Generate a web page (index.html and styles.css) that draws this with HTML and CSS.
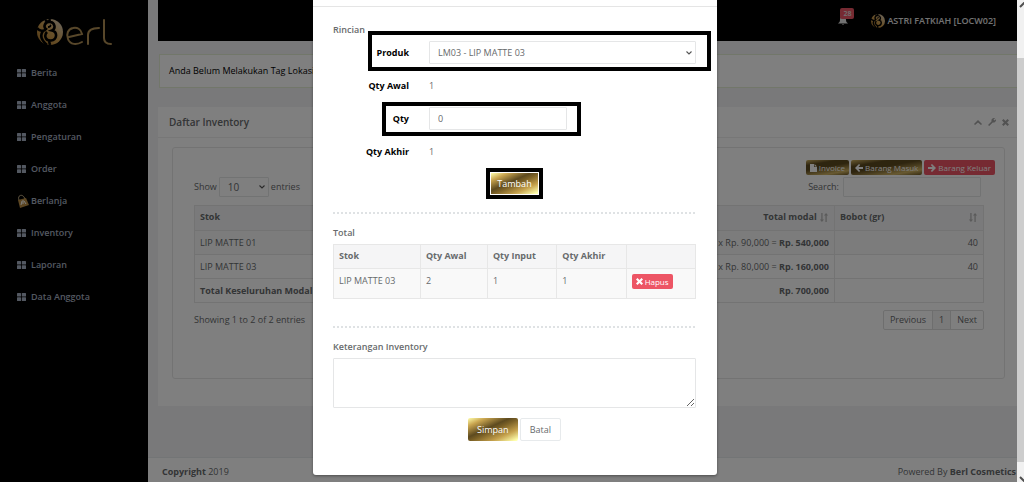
FILE: index.html
```html
<!DOCTYPE html>
<html lang="id">
  <head>
    <meta charset="UTF-8" />
    <meta name="viewport" content="width=device-width, initial-scale=1.0" />
    <title>Daftar Inventory</title>
    <link rel="stylesheet" href="styles.css">
  </head>
  <body>
    <!-- icon -->
    <svg class="sprite" width="0" height="0">
      <defs>
        <linearGradient id="gold" x1="0" y1="1" x2="1" y2="0">
          <stop offset="0" stop-color="#a8752c" />
          <stop offset="0.5" stop-color="#d0a052" />
          <stop offset="1" stop-color="#d8d0c4" />
        </linearGradient>
      </defs>
      <symbol id="i-grid" viewBox="0 0 9 8">
        <rect x="0" y="0" width="4" height="3.6" rx="0.5" />
        <rect x="4.8" y="0" width="4.2" height="3.6" rx="0.5" />
        <rect x="0" y="4.3" width="4" height="3.6" rx="0.5" />
        <rect x="4.8" y="4.3" width="4.2" height="3.6" rx="0.5" />
      </symbol>
      <symbol id="i-ball" viewBox="0 0 26 26">
        <circle cx="13" cy="13" r="13" />
        <g fill="none" stroke="#000" stroke-width="2.6">
          <path d="M0 9C2 12 7 13 9 10C6 8 8 2 13 3C18 3 19 10 15 11.500C21 13 20 21 14 21.500C8 22 7 16 10 13" />
          <path d="M6 12C3 16 4 21 10 26" />
          <path d="M11 8C13 8 14 7 13 6" stroke-width="2" />
          <path d="M12 22L13 26" />
          <path d="M8 1L11 3M13 0L12 3" />
        </g>
      </symbol>
      <symbol id="i-x" viewBox="0 0 10 10">
        <path d="M2.2 0L5 2.8L7.8 0L10 2.2L7.2 5L10 7.8L7.8 10L5 7.2L2.2 10L0 7.8L2.8 5L0 2.2Z" />
      </symbol>
      <symbol id="i-left" viewBox="0 0 10 10">
        <path d="M5 0L6.5 1.4L4.3 3.8H10V6.2H4.3L6.5 8.6L5 10L0 5Z" />
      </symbol>
      <symbol id="i-sort" viewBox="0 0 10 10">
        <path d="M2 0H3.4V7.2H5L2.7 10L0.4 7.2H2ZM6.6 10H8V2.8H9.6L7.3 0L5 2.8H6.6Z" />
      </symbol>
    </svg>

    <div class="shell">
      <div class="wrapper">
        <nav class="sidebar">
          <a class="logo" href="#" aria-label="Berl">
            <svg width="76" height="28" viewBox="0 0 76 28">
              <use href="#i-ball" x="0" y="1" width="26" height="26" fill="url(#gold)" />
              <g fill="none" stroke="#b08f55" stroke-width="2" stroke-linecap="round">
                <path d="M32 19L45 16C44 11 40 9 36 10C31 11 29 16 31 21C33 27 40 27 45 24" />
                <path d="M51 26V17C51 12 55 10 62 10" />
                <path d="M67 2V20C67 24 70 26 74 26" />
              </g>
            </svg>
          </a>
          <ul class="menu">
            <li><a href="#"><svg class="ic"><use href="#i-grid" /></svg>Berita</a></li>
            <li><a href="#"><svg class="ic"><use href="#i-grid" /></svg>Anggota</a></li>
            <li><a href="#"><svg class="ic"><use href="#i-grid" /></svg>Pengaturan</a></li>
            <li><a href="#"><svg class="ic"><use href="#i-grid" /></svg>Order</a></li>
            <li>
              <a href="#">
                <svg class="ic bag" viewBox="0 0 12 14">
                  <path d="M2 6C0 1 6 -1 8 5" fill="none" stroke="#c9b48a" />
                  <path d="M1 6L9 4L12 11L3 14Z" fill="#b98d45" />
                  <path d="M4 11L5 7L7 7L9 10M5 9H7" fill="none" stroke="#fff" />
                </svg>Berlanja</a>
            </li>
            <li><a href="#"><svg class="ic"><use href="#i-grid" /></svg>Inventory</a></li>
            <li><a href="#"><svg class="ic"><use href="#i-grid" /></svg>Laporan</a></li>
            <li><a href="#"><svg class="ic"><use href="#i-grid" /></svg>Data Anggota</a></li>
          </ul>
        </nav>

        <div class="page">
          <header class="topbar">
            <a class="bell" href="#" aria-label="Notifikasi">
              <svg width="10" height="9" viewBox="0 0 10 9">
                <path d="M5 0C7.500 0 8 2 8 4C8 6 9 6.500 10 7.500H0C1 6.500 2 6 2 4C2 2 2.500 0 5 0ZM4 8H6L5 9Z" />
              </svg>
              <span class="count">28</span>
            </a>
            <a class="user" href="#">
              <svg width="14" height="14"><use href="#i-ball" fill="url(#gold)" /></svg>
              ASTRI FATKIAH [LOCW02]
            </a>
          </header>

          <div class="alert">Anda Belum Melakukan Tag Lokasi.</div>

          <section class="ibox">
            <div class="ibox-title">
              <h5>Daftar Inventory</h5>
              <div class="ibox-tools">
                <a href="#" aria-label="Tutup"><svg width="8" height="5" viewBox="0 0 8 5"><path d="M4 0L8 4L7 5L4 2.500L1 5L0 4Z" /></svg></a>
                <a href="#" aria-label="Atur"><svg width="8" height="8" viewBox="0 0 8 8"><path d="M0 7L3.500 3.500C3 1 5 -0.500 7 0.200L5.500 1.500L6.500 2.500L8 1.200C8.500 3.500 6.500 5 4.700 4.500L1.200 8Z" /></svg></a>
                <a href="#" aria-label="Hapus"><svg width="7" height="7"><use href="#i-x" /></svg></a>
              </div>
            </div>
            <div class="panel">
              <div class="actions">
                <button class="btn-xs gold" type="button"><svg width="7" height="8" viewBox="0 0 7 8"><path d="M0 0H4V3H7V8H0ZM4.600 0L7 2.400H4.600Z" /></svg>Invoice</button>
                <button class="btn-xs gold" type="button"><svg width="8" height="8"><use href="#i-left" /></svg>Barang Masuk</button>
                <button class="btn-xs danger" type="button"><svg class="flip" width="8" height="8"><use href="#i-left" /></svg>Barang Keluar</button>
              </div>
              <div class="filters">
                <label>Show
                  <select class="control length"><option>10</option></select>
                  entries
                </label>
                <label>Search: <input class="control search" type="text" /></label>
              </div>
              <table class="table stock">
                <thead>
                  <tr>
                    <th>Stok</th>
                    <th class="num">Total modal <svg class="sort"><use href="#i-sort" /></svg></th>
                    <th class="bobot"><span>Bobot (gr)</span><svg class="sort"><use href="#i-sort" /></svg></th>
                  </tr>
                </thead>
                <tbody>
                  <tr class="odd"><td>LIP MATTE 01</td><td class="num">6 x Rp. 90,000 = <b>Rp. 540,000</b></td><td class="num">40</td></tr>
                  <tr><td>LIP MATTE 03</td><td class="num">2 x Rp. 80,000 = <b>Rp. 160,000</b></td><td class="num">40</td></tr>
                  <tr><td><b>Total Keseluruhan Modal</b></td><td class="num"><b>Rp. 700,000</b></td><td></td></tr>
                </tbody>
              </table>
              <div class="table-foot">
                <span>Showing 1 to 2 of 2 entries</span>
                <div class="pages">
                  <a href="#">Previous</a><a class="current" href="#">1</a><a href="#">Next</a>
                </div>
              </div>
            </div>
          </section>

          <footer class="footer">
            <span><b>Copyright</b> 2019</span>
            <span>Powered By <b>Berl Cosmetics</b></span>
          </footer>
        </div>

        <!-- modal -->
        <div class="backdrop">
          <form class="modal">
            <div class="modal-head"></div>
            <div class="modal-body">
              <h6>Rincian</h6>
              <div class="rows">
                <div class="row mark mark-produk">
                  <label for="produk">Produk</label>
                  <select class="control" id="produk"><option>LM03 - LIP MATTE 03</option></select>
                </div>
                <div class="row"><span class="name">Qty Awal</span><span>1</span></div>
                <div class="row mark mark-qty">
                  <label for="qty">Qty</label>
                  <input class="control qty" id="qty" type="text" value="0" />
                </div>
                <div class="row"><span class="name">Qty Akhir</span><span>1</span></div>
              </div>
              <div class="center">
                <button class="btn gold outlined" type="button">Tambah</button>
              </div>
              <hr />
              <h6>Total</h6>
              <table class="table total">
                <thead>
                  <tr><th>Stok</th><th>Qty Awal</th><th>Qty Input</th><th>Qty Akhir</th><th></th></tr>
                </thead>
                <tbody>
                  <tr class="odd">
                    <td>LIP MATTE 03</td><td>2</td><td>1</td><td>1</td>
                    <td><button class="btn-xs danger" type="button"><svg width="7" height="7"><use href="#i-x" /></svg>Hapus</button></td>
                  </tr>
                </tbody>
              </table>
              <hr class="wide" />
              <h6><label for="ket">Keterangan Inventory</label></h6>
              <textarea class="control" id="ket"></textarea>
              <div class="center submit">
                <button class="btn gold" type="button">Simpan</button>
                <button class="btn white" type="button">Batal</button>
              </div>
            </div>
          </form>
        </div>
      </div>

      <div class="scroll">
        <div class="end"><svg width="7" height="6" viewBox="0 0 7 6"><path d="M3 5L7 1L11 5" /></svg></div>
        <div class="thumb"></div>
        <div class="end bottom"><svg width="7" height="6" viewBox="0 0 7 6"><path d="M3 1L7 5L11 1" /></svg></div>
      </div>
    </div>
  </body>
</html>
```
FILE: styles.css
```css
* {
  box-sizing: border-box;
}
body {
  margin: 0;
  font: 9px/14px "Open Sans", sans-serif;
  color: #676a6c;
  background-color: #f3f3f4;
}
a {
  color: inherit;
  text-decoration: none;
}
button,
input,
select,
textarea {
  font: inherit;
  color: inherit;
}
svg {
  fill: currentColor;
}
.sprite {
  position: absolute;
}

.shell {
  display: flex;
  min-height: 100vh;
}
.wrapper {
  display: flex;
  flex: 1;
  position: relative;
}

/* sidebar */
.sidebar {
  width: 148px;
  background-color: #000;
  color: #a7b1c2;
  font-weight: 600;
}
.logo {
  display: block;
  height: 57px;
  padding: 18px 0 0 37px;
}
.menu {
  list-style: none;
  margin: 0;
  padding: 0;
}
.menu a {
  display: flex;
  align-items: center;
  height: 32px;
  padding-left: 17px;
  gap: 5px;
}
.ic {
  width: 9px;
  height: 8px;
}
.bag {
  width: 12px;
  height: 14px;
  margin-right: -3px;
}

/* isi halaman */
.page {
  display: flex;
  flex-direction: column;
  flex: 1;
}
.topbar {
  display: flex;
  justify-content: flex-end;
  align-items: center;
  height: 41px;
  margin-left: 10px;
  padding-right: 21px;
  gap: 23px;
  background-color: #000;
  color: #e4e4e4;
}
.bell {
  position: relative;
  height: 9px;
  line-height: 9px;
}
.count {
  position: absolute;
  left: 2px;
  top: -8px;
  padding: 0 3px;
  border-radius: 2px;
  background-color: #ed5565;
  font-size: 7px;
  line-height: 11px;
  font-weight: 600;
}
.user {
  display: flex;
  align-items: center;
  gap: 2px;
  font-weight: 600;
}
.alert {
  margin: 13px 0 19px 11px;
  padding: 9px;
  border: 1px solid #e4efd4;
  border-right: 0;
  background-color: #fff;
  color: #000;
}
.ibox {
  margin-left: 10px;
  padding-bottom: 27px;
  background-color: #fff;
}
.ibox-title {
  display: flex;
  justify-content: space-between;
  align-items: center;
  height: 31px;
  padding: 0 8px 0 11px;
  border-bottom: 1px solid #eee;
}
h5 {
  margin: 0;
  font-size: 10px;
  line-height: 14px;
  font-weight: 600;
}
.ibox-tools {
  display: flex;
  align-items: center;
  gap: 6px;
  color: #a4a4a4;
}
.ibox-tools a {
  display: flex;
}
.panel {
  height: 232px;
  margin: 9px 12px 0 14px;
  padding: 12px 20px 0 21px;
  border: 1px solid #e7e7e7;
  border-radius: 3px;
}
.actions {
  display: flex;
  justify-content: flex-end;
  gap: 2px;
  margin-right: -11px;
}
.filters {
  display: flex;
  justify-content: space-between;
  margin: 2px 0 8px;
}
.filters label {
  display: flex;
  align-items: center;
  gap: 2px;
}
.table-foot {
  display: flex;
  justify-content: space-between;
  align-items: center;
  margin-top: 7px;
}
.pages {
  display: flex;
  border: 1px solid #ddd;
  border-radius: 2px;
}
.pages a {
  padding: 2px 6px;
}
.pages .current {
  border: solid #ddd;
  border-width: 0 1px;
  background-color: #f4f4f4;
}
.footer {
  display: flex;
  justify-content: space-between;
  margin-top: auto;
  padding: 7px 1px 3px 14px;
  border-top: 1px solid #e7eaec;
  background-color: #fff;
}

/* tombol */
.btn-xs,
.btn {
  display: inline-flex;
  align-items: center;
  justify-content: center;
  border: 0;
  border-radius: 2px;
}
.btn-xs {
  height: 15px;
  padding: 0 4px;
  gap: 2px;
  font-size: 8px;
}
.btn {
  height: 23px;
  padding: 0 9px;
}
.flip {
  transform: scaleX(-1);
}
.gold {
  color: #fff;
  background: linear-gradient(to bottom right, #ffffac 0%, #c9a550 18%, #5d4a1f 42%, #7a6026 52%, #c4a04c 74%, #ffffac 96%);
}
.btn-xs.gold {
  background: linear-gradient(170deg, #d1b464 0%, #5d4a1f 25%, #5d4a1f 45%, #d1b464 80%, #6e5825 100%);
}
.danger {
  color: #fff;
  background-color: #ed5565;
}
.white {
  border: 1px solid #e7eaec;
  background-color: #fff;
}
.outlined {
  padding: 0 6px;
  border: 1px solid #fff;
  border-radius: 0;
  outline: 4px solid #000;
}

/* form */
.control {
  height: 23px;
  padding: 0 8px;
  border: 1px solid #e5e6e7;
  border-radius: 1px;
  background-color: #fff;
}
select.control {
  appearance: none;
  background-image: url("data:image/svg+xml,%3Csvg xmlns='http://www.w3.org/2000/svg' width='6' height='4'%3E%3Cpath d='M.5 .5L3 3L5.500 .5' fill='none' stroke='%23555' stroke-width='1.100'/%3E%3C/svg%3E");
  background-repeat: no-repeat;
  background-position: right 3px center;
}
.filters .control {
  height: 20px;
}
.filters .length {
  width: 50px;
  font-size: 10px;
}
.search {
  width: 138px;
  margin: 0 3px 0 2px;
}
textarea.control {
  display: block;
  width: 100%;
  height: 50px;
  resize: vertical;
}

/* tabel */
.table {
  width: 100%;
  border-collapse: collapse;
  border: 1px solid #e7e7e7;
}
.table th,
.table td {
  height: 24px;
  padding: 4px 5px;
  border: 1px solid #e7e7e7;
  text-align: left;
  vertical-align: top;
}
.table th {
  background-color: #f5f5f6;
  font-weight: 700;
}
.table td {
  padding-top: 5px;
}
.table .odd {
  background-color: #f9f9f9;
}
.table .num {
  text-align: right;
}
.stock th {
  height: 25px;
}
.stock th:last-child {
  width: 149px;
}
.sort {
  width: 10px;
  height: 9px;
  color: #b4b4b4;
  vertical-align: middle;
}
.bobot .sort {
  float: right;
  margin-top: 3px;
}
.total {
  table-layout: fixed;
}
.total th:first-child {
  width: 24%;
}
.total th:nth-child(2) {
  width: 67px;
}
.total td {
  height: 30px;
}

/* modal */
.backdrop {
  position: absolute;
  inset: 0;
  padding-left: 13px;
  background-color: rgba(0, 0, 0, 0.5);
}
.modal {
  width: 404px;
  margin: 0 auto;
  border-radius: 0 0 3px 3px;
  background-color: #fff;
  box-shadow: 0 1px 3px rgba(0, 0, 0, 0.4);
}
.modal-head {
  height: 7px;
  border-bottom: 1px solid #e5e5e5;
}
.modal-body {
  padding: 16px 21px 34px 20px;
}
h6 {
  margin: 0 0 4px;
  font-size: 9px;
  font-weight: 600;
}
.rows {
  display: grid;
  gap: 10px;
}
.row {
  display: grid;
  grid-template-columns: 76px 1fr;
  column-gap: 20px;
  align-items: center;
  min-height: 23px;
  position: relative;
}
.row label,
.name {
  text-align: right;
  font-weight: 700;
  color: #000;
}
.qty {
  width: 138px;
}
/* bingkai hitam di sekitar kolom isian */
.mark::after {
  content: "";
  position: absolute;
  border: 4px solid #000;
  pointer-events: none;
}
.mark-produk::after {
  inset: -10px -15px -7px 35px;
}
.mark-qty::after {
  inset: -5px 115px -6px 49px;
}
.center {
  display: flex;
  justify-content: center;
  gap: 2px;
  margin-top: 9px;
}
.submit {
  margin-top: 10px;
}
hr {
  height: 2px;
  margin: 17px 0 12px;
  border: 0;
  background: repeating-linear-gradient(to right, #dfe2e4 0 2px, #fff 2px 4px);
}
hr.wide {
  margin-top: 27px;
}

/* scrollbar */
.scroll {
  display: flex;
  flex-direction: column;
  width: 7px;
}
.end {
  height: 58px;
  background-color: #f1f1f1;
}
.end svg {
  display: block;
  margin-top: 2px;
  fill: none;
  stroke: #505050;
  stroke-width: 2;
}
.end.bottom {
  display: flex;
  align-items: flex-end;
  height: 20px;
}
.thumb {
  flex: 1;
  background-color: #cdcdcd;
}
```
